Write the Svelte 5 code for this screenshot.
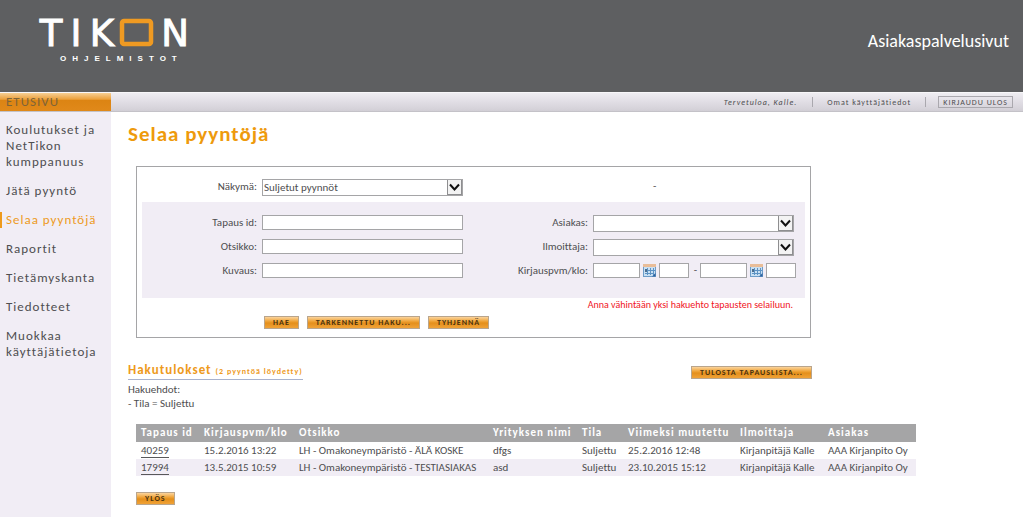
<script>
  const menu = [
    'Koulutukset ja NetTikon kumppanuus',
    'Jätä pyyntö',
    'Selaa pyyntöjä',
    'Raportit',
    'Tietämyskanta',
    'Tiedotteet',
    'Muokkaa käyttäjätietoja'
  ];
  const current = 'Selaa pyyntöjä';

  const columns = [
    { title: 'Tapaus id', width: 63 },
    { title: 'Kirjauspvm/klo', width: 95 },
    { title: 'Otsikko', width: 194 },
    { title: 'Yrityksen nimi', width: 89 },
    { title: 'Tila', width: 46 },
    { title: 'Viimeksi muutettu', width: 112 },
    { title: 'Ilmoittaja', width: 88 },
    { title: 'Asiakas', width: 93 }
  ];
  const total = columns.reduce((sum, c) => sum + c.width, 0);

  const rows = [
    ['40259', '15.2.2016 13:22', 'LH - Omakoneympäristö - ÄLÄ KOSKE', 'dfgs', 'Suljettu', '25.2.2016 12:48', 'Kirjanpitäjä Kalle', 'AAA Kirjanpito Oy'],
    ['17994', '13.5.2015 10:59', 'LH - Omakoneympäristö - TESTIASIAKAS', 'asd', 'Suljettu', '23.10.2015 15:12', 'Kirjanpitäjä Kalle', 'AAA Kirjanpito Oy']
  ];
</script>

{#snippet arrow()}
  <span class="arrow">
    <svg viewBox="0 0 14 14" width="14" height="14" aria-hidden="true">
      <path d="M2 4.500 6.500 9.500l4.500-5" fill="none" stroke="#111" stroke-width="2" />
    </svg>
  </span>
{/snippet}

{#snippet calendar()}
  <button type="button" class="calendar" aria-label="Kalenteri">
    <svg viewBox="0 0 13 13" width="13" height="13" aria-hidden="true">
      <rect x="0" y="0" width="13" height="13" fill="#6d9cc8" />
      <rect x="0" y="0" width="13" height="3" fill="#e9bd98" />
      <rect x="1" y="3" width="11" height="9" fill="#c9e0f3" />
      <path d="M4.500 4v7M7.500 4v7M10.500 4v7M2 6.500h10M2 9.500h8" stroke="#5d93c4" stroke-width="1" fill="none" />
      <rect x="2" y="5" width="2" height="3" fill="#4a6d8f" />
      <path d="M9 12.500 12.500 9v3.500z" fill="#2c62a0" />
    </svg>
  </button>
{/snippet}

<div class="page">
  <header>
    <svg class="logo" viewBox="0 0 170 70" width="170" height="70" role="img" aria-label="Tikon Ohjelmistot">
      <g class="mark">
        <text x="23" y="46">T</text>
        <text x="48" y="46">I</text>
        <text x="74" y="46">K</text>
        <text x="147" y="46">N</text>
      </g>
      <rect x="94" y="21" width="29" height="23" rx="2" fill="none" stroke="#ef9a22" stroke-width="4.500" />
      <text class="sub" x="32" y="61">OHJELMISTOT</text>
    </svg>
    <div class="site">Asiakaspalvelusivut</div>
  </header>

  <div class="bar">
    <a class="home" href="#etusivu">ETUSIVU</a>
    <div class="user">
      <em>Tervetuloa, Kalle.</em>
      <a class="own" href="#tiedot">Omat käyttäjätiedot</a>
      <button type="button" class="logout">KIRJAUDU ULOS</button>
    </div>
  </div>

  <div class="body">
    <nav>
      {#each menu as item}
        <a href="#sivu" class:active={item === current}>{item}</a>
      {/each}
    </nav>

    <main>
      <h1>Selaa pyyntöjä</h1>

      <form onsubmit={(e) => e.preventDefault()}>
        <div class="fields view">
          <label for="view">Näkymä:</label>
          <span class="select"><select id="view"><option>Suljetut pyynnöt</option></select>{@render arrow()}</span>
          <span class="dash">-</span>
        </div>
        <div class="fields band">
          <label for="case">Tapaus id:</label>
          <input id="case" type="text" />
          <label for="customer">Asiakas:</label>
          <span class="select"><select id="customer"><option></option></select>{@render arrow()}</span>

          <label for="title">Otsikko:</label>
          <input id="title" type="text" />
          <label for="reporter">Ilmoittaja:</label>
          <span class="select"><select id="reporter"><option></option></select>{@render arrow()}</span>

          <label for="desc">Kuvaus:</label>
          <input id="desc" type="text" />
          <label for="from">Kirjauspvm/klo:</label>
          <span class="dates">
            <input id="from" class="date" type="text" />
            {@render calendar()}
            <input class="time" type="text" aria-label="Alkaen klo" />
            <span class="sep">-</span>
            <input class="date" type="text" aria-label="Päättyen pvm" />
            {@render calendar()}
            <input class="time" type="text" aria-label="Päättyen klo" />
          </span>
        </div>
        <p class="error">Anna vähintään yksi hakuehto tapausten selailuun.</p>
        <div class="buttons">
          <button class="btn">HAE</button>
          <button class="btn" type="button">TARKENNETTU HAKU...</button>
          <button class="btn" type="reset">TYHJENNÄ</button>
        </div>
      </form>

      <div class="summary">
        <div>
          <h2>Hakutulokset <small>(2 pyyntöä löydetty)</small></h2>
          <p>Hakuehdot:<br />- Tila = Suljettu</p>
        </div>
        <button class="btn" type="button">TULOSTA TAPAUSLISTA...</button>
      </div>

      <table>
        <colgroup>
          {#each columns as column}
            <col style:width="{(column.width / total) * 100}%" />
          {/each}
        </colgroup>
        <thead>
          <tr>
            {#each columns as column}<th scope="col">{column.title}</th>{/each}
          </tr>
        </thead>
        <tbody>
          {#each rows as row}
            <tr>
              {#each row as cell, i}
                <td>{#if i === 0}<a href="#tapaus">{cell}</a>{:else}{cell}{/if}</td>
              {/each}
            </tr>
          {/each}
        </tbody>
      </table>

      <button class="btn top" type="button">YLÖS</button>
    </main>
  </div>
</div>

<style>
  :global(body) {
    margin: 0;
    background: #fff;
  }
  .page {
    --side: 111px;
    min-height: 100vh;
    display: flex;
    flex-direction: column;
    font-family: Calibri, Carlito, Lato, sans-serif;
    font-size: 11px;
    line-height: 14px;
    font-variant-ligatures: none;
    color: #4e4e50;
  }
  .page * {
    box-sizing: border-box;
  }
  a {
    color: inherit;
    text-decoration: none;
  }
  button,
  input,
  select {
    font: inherit;
    font-variant-ligatures: none;
    color: inherit;
    margin: 0;
    border-radius: 0;
  }
  header {
    height: 92px;
    padding: 0 14px 0 28px;
    display: flex;
    justify-content: space-between;
    background: #5e5f61;
    color: #fff;
  }
  .logo {
    fill: #fff;
  }
  .mark {
    font-family: 'DejaVu Sans', sans-serif;
    font-size: 37px;
    text-anchor: middle;
    stroke: #fff;
    stroke-width: 1px;
  }
  .sub {
    font: bold 8px 'Liberation Sans', Arial, sans-serif;
    letter-spacing: 6px;
  }
  .site {
    padding-top: 30px;
    font-size: 18px;
    line-height: 22px;
  }
  .bar {
    height: 20px;
    display: flex;
    border-top: 1px solid #f8f7f9;
    border-bottom: 1px solid #c4c2c8;
    background: linear-gradient(#efedf2, #e2dfe6 45%, #d2cfd6);
  }
  .home {
    width: var(--side);
    padding-left: 6px;
    font-size: 13px;
    line-height: 18px;
    letter-spacing: 1px;
    color: #7d6439;
    background: linear-gradient(#f6cf94, #eba03c 35%, #dc8413 40%, #e0891a);
  }
  .user {
    flex: 1;
    display: flex;
    justify-content: flex-end;
    align-items: center;
    padding-right: 10px;
    font-size: 8px;
    letter-spacing: 1px;
    line-height: 10px;
  }
  .own {
    margin: 0 12px 0 15px;
    padding: 0 14px;
    border: solid #aaa8ae;
    border-width: 0 1px;
  }
  .logout {
    height: 12px;
    padding: 0 4px;
    border: 1px solid #aaa8ae;
    background: transparent;
    letter-spacing: 1px;
    line-height: 10px;
  }
  .body {
    flex: 1;
    display: flex;
  }
  nav {
    flex: none;
    width: var(--side);
    padding-top: 10px;
    display: flex;
    flex-direction: column;
    gap: 13px;
    background: #f1edf5;
    font-size: 13px;
    line-height: 16px;
    letter-spacing: 1px;
  }
  nav a {
    padding: 0 6px;
  }
  nav a.active {
    padding-left: 4px;
    border-left: 2px solid #ee9a1c;
    color: #ee9a1c;
  }
  main {
    flex: 1;
    min-width: 0;
    padding: 10px 17px;
  }
  h1 {
    margin: 0 0 20px;
    font-size: 21px;
    line-height: 24px;
    letter-spacing: 1px;
    color: #ee9a0c;
  }
  form {
    max-width: 675px;
    margin-left: 8px;
    padding: 0 5px;
    border: 1px solid #a5a5a7;
  }
  .fields {
    display: grid;
    grid-template-columns: 115px 201px 1fr 203px;
    column-gap: 5px;
    align-items: start;
    padding-right: 9px;
  }
  .view {
    padding-top: 12px;
    height: 35px;
  }
  .band {
    row-gap: 8px;
    grid-auto-rows: 16px;
    height: 96px;
    padding-top: 13px;
    background: #f1edf5;
  }
  label {
    text-align: right;
    line-height: 16px;
  }
  input {
    width: 100%;
    height: 15px;
    padding: 0 2px;
    border: 1px solid #a5a5a7;
    background: #fff;
  }
  .select {
    position: relative;
    display: block;
    width: 201px;
  }
  select {
    appearance: none;
    display: block;
    width: 100%;
    height: 17px;
    padding: 0 18px 0 1px;
    border: 1px solid #a5a5a7;
    background: #fff;
  }
  .arrow {
    position: absolute;
    inset: 1px 1px 1px auto;
    width: 15px;
    border: 1px solid #8e8e90;
    border-width: 0 1px 1px 1px;
    background: #f3f3f3;
    pointer-events: none;
    overflow: hidden;
  }
  .arrow svg {
    display: block;
  }
  .dash {
    grid-column: 4;
    padding-left: 60px;
  }
  .dates {
    display: flex;
    gap: 3px;
  }
  .date {
    flex: none;
    width: 47px;
  }
  .time {
    flex: none;
    width: 30px;
  }
  .sep {
    width: 6px;
    text-align: right;
  }
  .calendar {
    padding: 0;
    border: 0;
    background: none;
  }
  .calendar svg {
    display: block;
  }
  .error {
    margin: 0;
    padding-right: 12px;
    text-align: right;
    font-size: 10px;
    color: #f0141e;
  }
  .buttons {
    display: flex;
    gap: 8px;
    padding: 4px 0 8px 122px;
  }
  .btn {
    height: 13px;
    padding: 0 8px;
    border: 1px solid #b9a58c;
    background: linear-gradient(#fbd49c, #efa236 40%, #e48f1c 55%, #f0a236);
    font-size: 8px;
    font-weight: bold;
    line-height: 11px;
    letter-spacing: 1px;
    color: #4a3210;
    white-space: nowrap;
  }
  .summary {
    display: flex;
    justify-content: space-between;
    align-items: flex-start;
    max-width: 684px;
    margin: 24px 0 13px;
  }
  .summary .btn {
    margin-top: 4px;
  }
  h2 {
    margin: 0 0 3px;
    border-bottom: 1px solid #a9b3cd;
    font-size: 13px;
    line-height: 15px;
    letter-spacing: 1px;
    color: #ee9a1c;
  }
  small {
    font-size: 8px;
  }
  .summary p {
    margin: 0;
  }
  table {
    width: 100%;
    max-width: 780px;
    margin-left: 8px;
    table-layout: fixed;
    border-collapse: collapse;
    white-space: nowrap;
  }
  th,
  td {
    padding: 0 0 0 5px;
    height: 17px;
    line-height: 16px;
    text-align: left;
  }
  th {
    height: 18px;
    background: #a5a5a6;
    color: #fff;
    letter-spacing: 1px;
  }
  tbody tr:nth-child(even) {
    background: #f1edf5;
  }
  td a {
    border-bottom: 1px solid #58585a;
  }
  .top {
    display: block;
    margin: 16px 0 0 8px;
  }
</style>
